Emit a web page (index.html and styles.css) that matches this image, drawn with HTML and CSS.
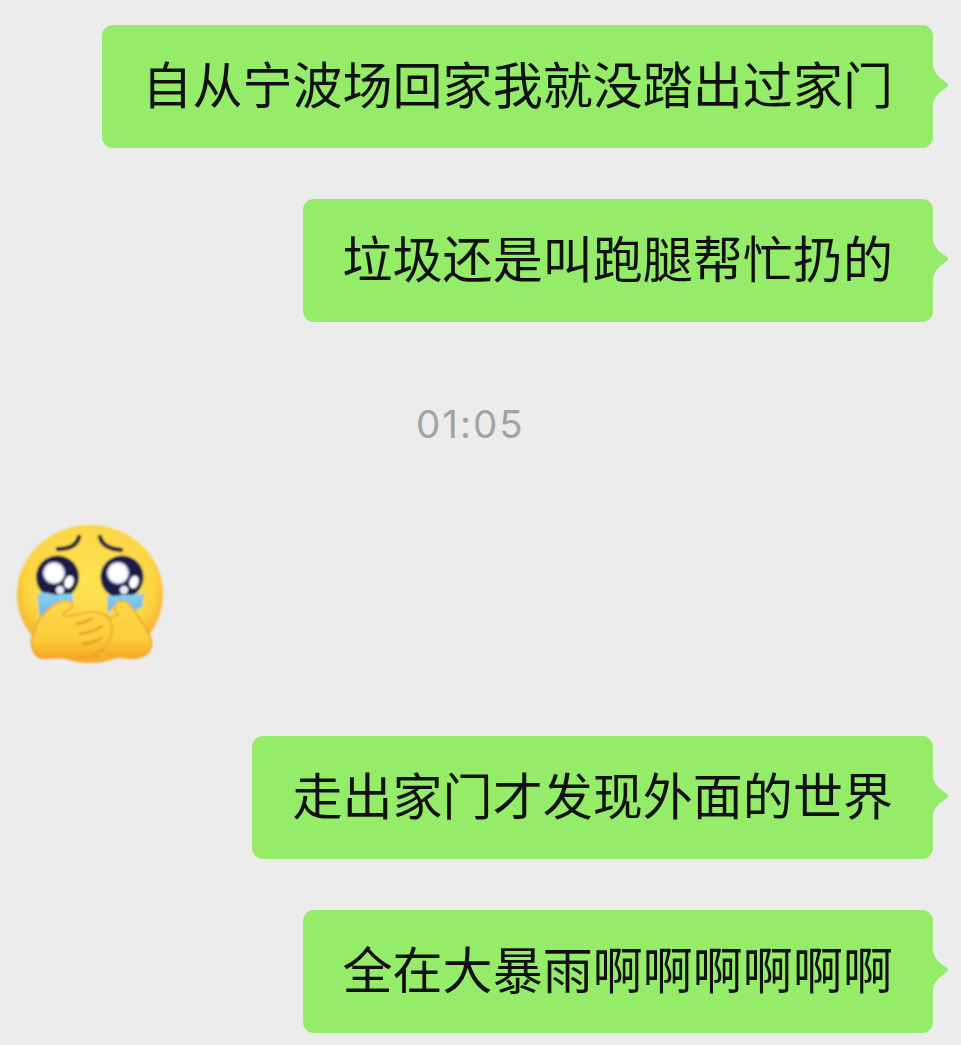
FILE: index.html
```html
<!DOCTYPE html>
<html lang="zh-CN">
<head>
    <meta charset="UTF-8">
    <meta name="viewport" content="width=device-width, initial-scale=1.0">
    <title>聊天记录</title>
    <link rel="stylesheet" href="styles.css">
</head>
<body>
    <div class="chat">
        <div class="bubble">自从宁波场回家我就没踏出过家门</div>
        <div class="bubble">垃圾还是叫跑腿帮忙扔的</div>
        <div class="time">01:05</div>
        <svg class="emoji" viewBox="0 0 180 165" width="180" height="165">
            <defs>
                <radialGradient id="faceFill" cx="0.5" cy="0.4" r="0.6">
                    <stop offset="0" stop-color="#fee352"/>
                    <stop offset="0.72" stop-color="#fdd543"/>
                    <stop offset="1" stop-color="#f4aa2c"/>
                </radialGradient>
                <linearGradient id="handFill" x1="0" y1="0" x2="0" y2="1">
                    <stop offset="0" stop-color="#fdd94a"/>
                    <stop offset="0.65" stop-color="#fccd3c"/>
                    <stop offset="1" stop-color="#f6a826"/>
                </linearGradient>
                <linearGradient id="tearFill" x1="0" y1="0" x2="0" y2="1">
                    <stop offset="0" stop-color="#8dd2f3"/>
                    <stop offset="1" stop-color="#5fb2e4"/>
                </linearGradient>
                <filter id="soft" x="-5%" y="-5%" width="110%" height="110%">
                    <feGaussianBlur stdDeviation="0.8"/>
                </filter>
            </defs>
            <g filter="url(#soft)">
                <ellipse cx="90" cy="84" rx="73" ry="69" fill="url(#faceFill)"/>
                <path d="M58 39 C70 39 77 35 79 27" fill="none" stroke="#24233f" stroke-width="4.5" stroke-linecap="round"/>
                <path d="M100 27 C102 35 109 39 121 40" fill="none" stroke="#24233f" stroke-width="4.5" stroke-linecap="round"/>

                <circle cx="57.5" cy="67" r="21.5" fill="#1c1f4a"/>
                <circle cx="122" cy="67" r="21.5" fill="#1c1f4a"/>
                <circle cx="54" cy="63" r="11" fill="#c9cde2"/>
                <circle cx="118" cy="63" r="11" fill="#c9cde2"/>
                <circle cx="54" cy="63" r="9.5" fill="#fff"/>
                <ellipse cx="69" cy="72" rx="4.5" ry="6.5" fill="#fff" transform="rotate(20 69 72)"/>
                <circle cx="60" cy="80" r="4" fill="#e8ecf6"/>
                <circle cx="118" cy="63" r="9.5" fill="#fff"/>
                <ellipse cx="134" cy="72" rx="4.5" ry="6.5" fill="#fff" transform="rotate(20 134 72)"/>
                <circle cx="124" cy="80" r="4" fill="#e8ecf6"/>

                <path d="M37 85 C41 81 47 83 52 84 C60 86 66 82 73 84 L73 95 L45 110 L40 108 Z" fill="url(#tearFill)"/>
                <path d="M107 85 C112 88 120 84 128 85 C134 85 140 82 144 85 L142 97 L135 100 L130 95 L117 92 L108 104 Z" fill="url(#tearFill)"/>

                <path d="M117 92 C122 90 127 92 130 95 C137 104 143 114 148 122 C152 128 153 137 148 143 C142 148 136 149 128 148 C118 147 108 146 98 140 L90 115 L118 105 C114 101 114 96 117 92 Z" fill="url(#handFill)" stroke="#ee9f24" stroke-width="1.5"/>
                <path d="M100 146 C90 150 70 146 50 148 C42 149 36 148 34 142 C31 136 31 130 33 126 C35 118 37 112 41 107 C46 101 51 96 57 93 C62 90 68 90 71 92 C74 94 73 97 70 99 C67 101 63 103 63 105 C64 108 72 105 83 103 C90 102 96 101 101 103 C107 105 111 110 111.500 116 C113 123 110 131 105 137 C101 141 96 144 90 145 Z" fill="url(#handFill)" stroke="#ee9f24" stroke-width="1.5"/>
                <path d="M77 114 C83 113 88 111 92 108" fill="none" stroke="#e69c22" stroke-width="2.500" stroke-linecap="round"/>
                <path d="M80 124 C88 123 96 120 102 116" fill="none" stroke="#e69c22" stroke-width="2.500" stroke-linecap="round"/>
                <path d="M83 134 C90 133 97 131 102 128" fill="none" stroke="#e69c22" stroke-width="2.500" stroke-linecap="round"/>
            </g>
        </svg>
        <div class="bubble bubble-after-emoji">走出家门才发现外面的世界</div>
        <div class="bubble">全在大暴雨啊啊啊啊啊啊</div>
    </div>
</body>
</html>
```

FILE: styles.css
```css
* {
    box-sizing: border-box;
    padding: 0;
    margin: 0;
}

body {
    background-color: #ececec;
    font-family: "Noto Sans CJK SC", "Liberation Sans", sans-serif;
    color: #111;
    overflow: hidden;
}

.chat {
    display: flex;
    flex-direction: column;
    align-items: flex-end;
    padding: 25px 28px 12px 0;
}

.bubble {
    position: relative;
    height: 123px;
    padding: 0 40px 9px 40px;
    display: flex;
    align-items: center;
    font-size: 50px;
    letter-spacing: 0.042px;
    white-space: nowrap;
    background-color: #95ec69;
    border-radius: 11px;
}

.bubble + .bubble {
    margin-top: 51px;
}

.bubble:after {
    content: "";
    position: absolute;
    top: 41px;
    right: -16px;
    width: 16px;
    height: 38px;
    background-color: #95ec69;
    clip-path: path("M0 0 C1 5 3 8 6 11 L14 17 Q16 19 14 21 L6 27 C3 30 1 33 0 38 Z");
}

.time {
    align-self: flex-start;
    margin: 79px 0 0 416px;
    height: 46px;
    line-height: 46px;
    font-family: Inter, "Liberation Sans", sans-serif;
    font-size: 38.5px;
    letter-spacing: 2px;
    color: #a3a3a3;
}

.emoji {
    display: block;
    align-self: flex-start;
    margin-top: 63px;
}

.bubble-after-emoji {
    margin-top: 61px;
}
```
